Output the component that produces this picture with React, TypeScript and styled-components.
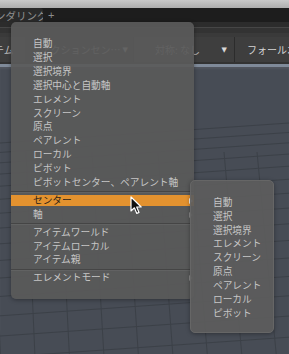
import React from 'react';
import styled, { createGlobalStyle } from 'styled-components';

const GlobalStyle = createGlobalStyle`
  html, body {
    margin: 0;
    padding: 0;
    background: #474c55;
  }
  * {
    box-sizing: border-box;
  }
`;

const FONT = `"Noto Sans CJK JP", "Noto Sans", sans-serif`;

const mainItems: (string | null)[] = [
  '自動',
  '選択',
  '選択境界',
  '選択中心と自動軸',
  'エレメント',
  'スクリーン',
  '原点',
  'ペアレント',
  'ローカル',
  'ピボット',
  'ピボットセンター、ペアレント軸',
  null,
  'センター',
  '軸',
  null,
  'アイテムワールド',
  'アイテムローカル',
  'アイテム親',
  null,
  'エレメントモード',
];

const withArrow = ['センター', '軸', 'エレメントモード'];

const subItems = [
  '自動',
  '選択',
  '選択境界',
  'エレメント',
  'スクリーン',
  '原点',
  'ペアレント',
  'ローカル',
  'ピボット',
];

function App(): JSX.Element {
  return (
    <Screen>
      <GlobalStyle />
      <TitleStrip />
      <TabBar>
        <Tab>ンダリング</Tab>
        <AddTab>+</AddTab>
      </TabBar>
      <SubStrip />
      <Toolbar>
        <ToolText $width={22}>システム</ToolText>
        <ToolButton>
          <ToolLabel>アクションセン…</ToolLabel>
          <Caret>▼</Caret>
        </ToolButton>
        <ToolSep />
        <ToolGroup $width={100}>
          <ToolLabel>対称: なし</ToolLabel>
          <Caret>▼</Caret>
        </ToolGroup>
        <ToolSep />
        <ToolText $width={60} $bright>
          フォールオフ
        </ToolText>
      </Toolbar>
      <Viewport>
        <Grid viewBox="0 0 289 290" preserveAspectRatio="none">
          {Array.from({ length: 16 }).map((_, i) => {
            const y = 70 + i * 9 + i * i * 0.45;
            return (
              <line
                key={'h' + i}
                x1={0}
                y1={y + 6}
                x2={289}
                y2={y - 14}
                stroke="#3c4148"
                strokeWidth={1}
              />
            );
          })}
          {Array.from({ length: 12 }).map((_, i) => {
            const x = -40 + i * 33;
            return (
              <line
                key={'v' + i}
                x1={x}
                y1={85}
                x2={x + 6 + i * 1.5}
                y2={290}
                stroke="#3c4148"
                strokeWidth={1}
              />
            );
          })}
        </Grid>
      </Viewport>

      <Menu>
        {mainItems.map((item, i) =>
          item === null ? (
            <Separator key={i} />
          ) : (
            <MenuRow key={i} $active={item === 'センター'}>
              <RowLabel>{item}</RowLabel>
              {withArrow.includes(item) && <SubArrow $active={item === 'センター'} />}
            </MenuRow>
          )
        )}
      </Menu>

      <SubMenu>
        {subItems.map((item) => (
          <MenuRow key={item}>
            <RowLabel>{item}</RowLabel>
          </MenuRow>
        ))}
      </SubMenu>

      <Cursor width="13" height="19" viewBox="0 0 13 19">
        <path
          d="M1 1 L1 15 L4.4 11.8 L6.8 17.4 L9 16.4 L6.7 11 L11.2 11 Z"
          fill="#111"
          stroke="#fff"
          strokeWidth="1.2"
          strokeLinejoin="round"
        />
      </Cursor>
    </Screen>
  );
}

export default App;

const Screen = styled.div`
  position: relative;
  width: 289px;
  height: 354px;
  overflow: hidden;
  display: flex;
  flex-direction: column;
  font-family: ${FONT};
  background: #474c55;
`;

const TitleStrip = styled.div`
  height: 8px;
  flex: none;
  background: linear-gradient(#c9c9c9, #adadad);
`;

const TabBar = styled.div`
  height: 14px;
  flex: none;
  display: flex;
  align-items: center;
  background: #1d1d1d;
  overflow: hidden;
`;

const Tab = styled.div`
  height: 100%;
  width: 48px;
  margin-left: -5px;
  padding-left: 0;
  display: flex;
  align-items: center;
  background: #2a2a2a;
  color: #8e8e8e;
  font-size: 10.5px;
  white-space: nowrap;
  overflow: hidden;
  border-radius: 0 3px 0 0;
`;

const AddTab = styled.div`
  margin-left: 5px;
  color: #8c8c8c;
  font-size: 11px;
  font-family: "Liberation Sans", sans-serif;
`;

const SubStrip = styled.div`
  height: 15px;
  flex: none;
  background: #333333;
  border-top: 5px solid #2c2c2c;
  border-bottom: 4px solid #3a3a3a;
  box-shadow: inset 0 1px 0 #464646;
`;

const Toolbar = styled.div`
  height: 27px;
  flex: none;
  display: flex;
  align-items: center;
  background: #3e3e3e;
  border-bottom: 2px solid #333;
  overflow: hidden;
`;

const ToolText = styled.div<{ $width: number; $bright?: boolean }>`
  flex: none;
  width: ${(p) => p.$width}px;
  margin-left: ${(p) => (p.$bright ? 12 : -26)}px;
  padding-left: 0;
  color: ${(p) => (p.$bright ? '#d4d4d4' : '#bcbcbc')};
  font-size: 10px;
  white-space: nowrap;
  overflow: visible;
  ${(p) => (p.$bright ? '' : 'width: 48px;')}
`;

const ToolButton = styled.div`
  flex: none;
  width: 108px;
  height: 25px;
  margin-left: 3px;
  display: flex;
  align-items: center;
  justify-content: flex-end;
  gap: 2px;
  padding-right: 5px;
  background: #373737;
  border-radius: 2px;
`;

const ToolGroup = styled.div<{ $width: number }>`
  flex: none;
  width: ${(p) => p.$width}px;
  display: flex;
  align-items: center;
  justify-content: space-between;
  padding: 0 7px 0 21px;
`;

const ToolLabel = styled.span`
  color: #b4b4b4;
  font-size: 10px;
  white-space: nowrap;
`;

const Caret = styled.span`
  color: #d8d8d8;
  font-size: 7px;
  font-family: "DejaVu Sans", sans-serif;
`;

const ToolSep = styled.div`
  flex: none;
  width: 1px;
  height: 100%;
  background: #2c2c2c;
`;

const Viewport = styled.div`
  position: relative;
  flex: 1;
  background: #474c55;
  border-top: 3px solid #7f8a99;
  box-shadow: inset 0 2px 2px rgba(255, 255, 255, 0.06);
`;

const Grid = styled.svg`
  width: 100%;
  height: 100%;
  display: block;
`;

const Menu = styled.div`
  position: absolute;
  left: 11px;
  top: 22px;
  width: 183px;
  height: 277px;
  padding: 15px 0 14px;
  background: rgba(90, 90, 90, 0.92);
  border-radius: 5px;
  box-shadow: 0 1px 4px rgba(0, 0, 0, 0.35);
`;

const SubMenu = styled.div`
  position: absolute;
  left: 190px;
  top: 180px;
  width: 84px;
  height: 153px;
  padding: 14.7px 0 0;
  background: rgba(92, 92, 92, 0.93);
  border: 1px solid #666;
  border-radius: 5px;
  box-shadow: 0 1px 4px rgba(0, 0, 0, 0.35);
`;

const MenuRow = styled.div<{ $active?: boolean }>`
  position: relative;
  height: 13.9px;
  display: flex;
  align-items: center;
  padding-left: 22px;
  color: ${(p) => (p.$active ? '#2a2218' : '#c6c6c6')};
  &::before {
    content: '';
    position: absolute;
    left: 0;
    right: 0;
    top: 1.3px;
    bottom: 1.3px;
    background: ${(p) => (p.$active ? '#e3922f' : 'transparent')};
  }
`;

const RowLabel = styled.span`
  position: relative;
  font-size: 9.7px;
  line-height: 1;
  white-space: nowrap;
`;

const SubArrow = styled.span<{ $active?: boolean }>`
  position: absolute;
  right: 1px;
  top: 50%;
  margin-top: -3px;
  width: 0;
  height: 0;
  border-top: 3px solid transparent;
  border-bottom: 3px solid transparent;
  border-left: 4px solid ${(p) => (p.$active ? '#f4f4f4' : '#8a8a8a')};
`;

const Separator = styled.div`
  height: 4px;
  display: flex;
  align-items: center;
  &::after {
    content: '';
    flex: 1;
    height: 1px;
    background: #454545;
    box-shadow: 0 1px 0 rgba(255, 255, 255, 0.06);
  }
`;

const Cursor = styled.svg`
  position: absolute;
  left: 130px;
  top: 196px;
`;
